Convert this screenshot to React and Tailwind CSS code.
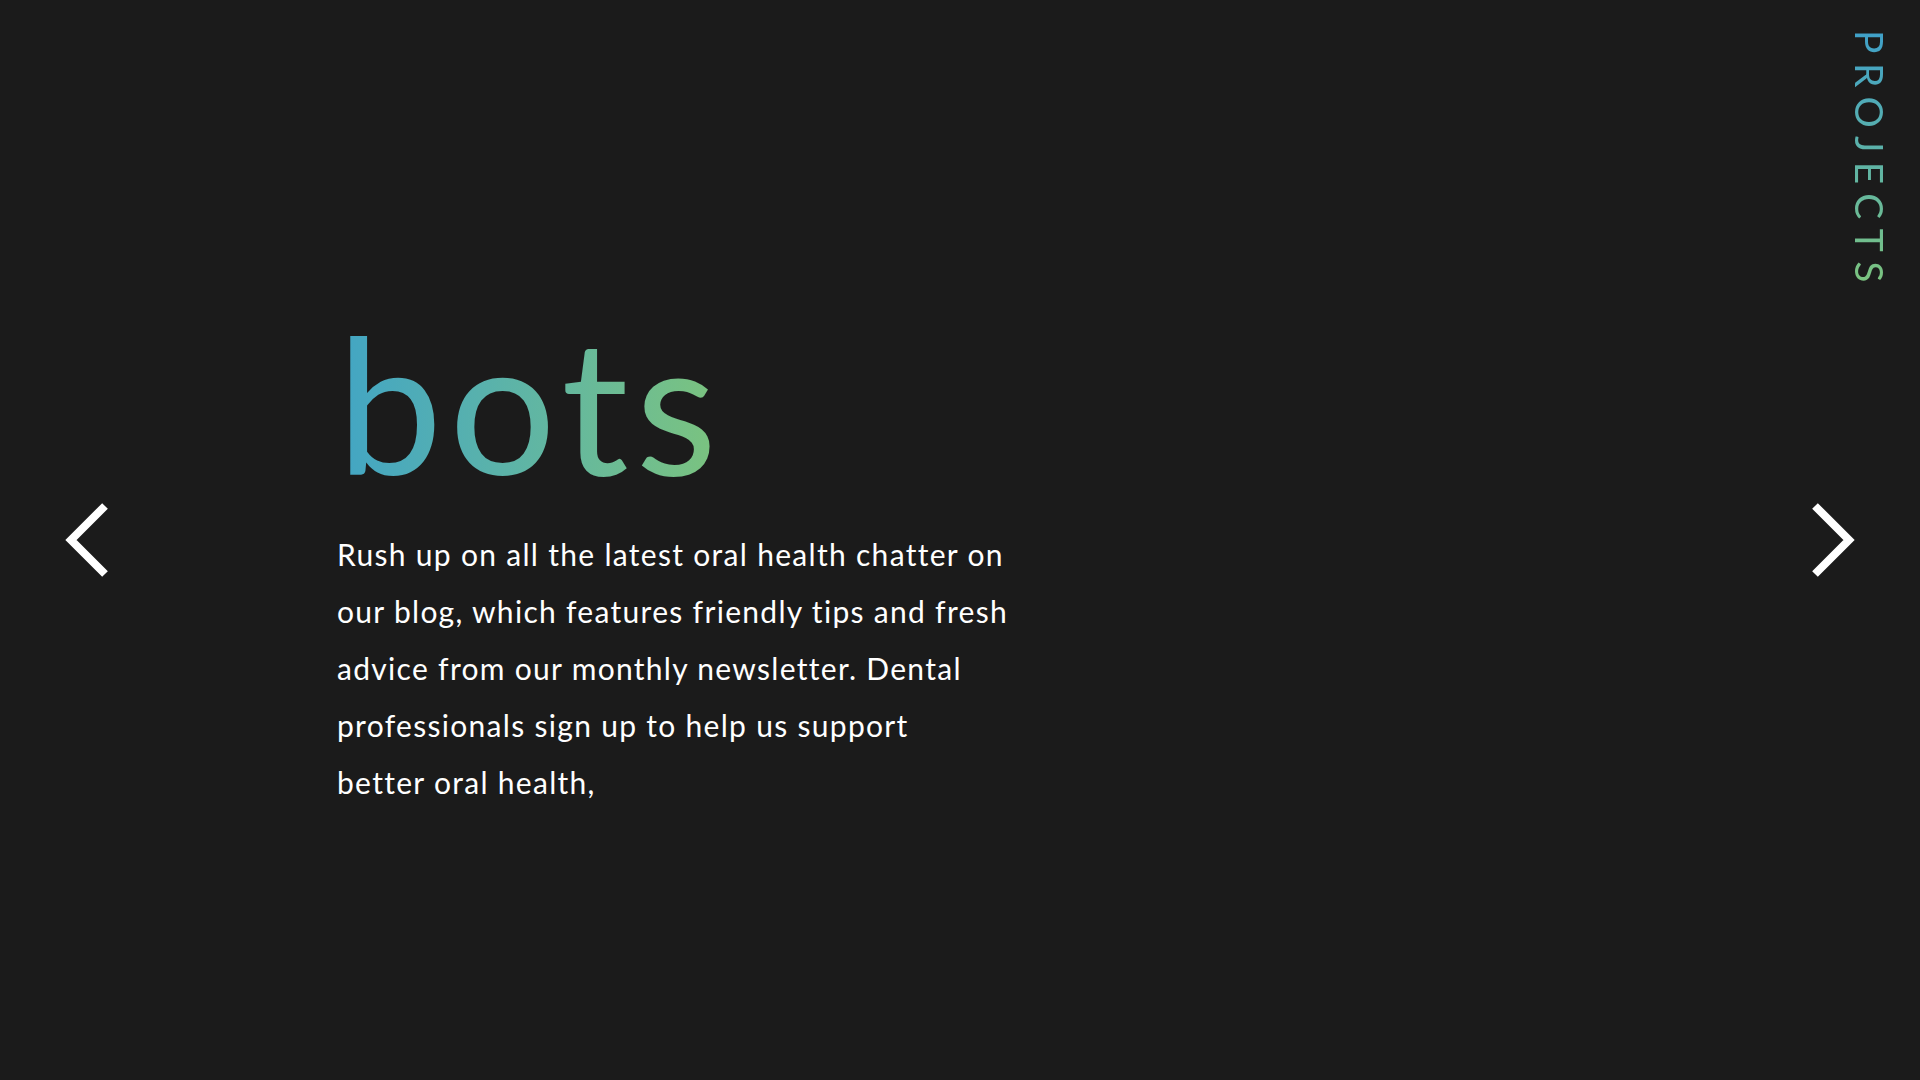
export default function App() {
  const lines = [
    "Rush up on all the latest oral health chatter on",
    "our blog, which features friendly tips and fresh",
    "advice from our monthly newsletter. Dental",
    "professionals sign up to help us support",
    "better oral health,",
  ];
  return (
    <div className="relative h-screen w-full overflow-hidden bg-[#1b1b1b] font-['Lato',sans-serif]">
      <div className="flex h-full items-center">
        <div className="w-[337px] shrink-0 pl-[62px]">
          <svg width="50" height="80" viewBox="0 0 50 80" fill="none">
            <polyline points="43,6 9,40 43,74" stroke="#ffffff" strokeWidth="8" strokeLinejoin="miter" />
          </svg>
        </div>
        <div className="flex-1 self-start pt-[308px]">
          <h1 className="inline-block bg-linear-to-r from-[#42a5c4] to-[#7dc47b] bg-clip-text pr-[8px] text-[188px] font-normal leading-none tracking-[7px] text-transparent">
            bots
          </h1>
          <div className="mt-[30px] text-[30px] font-normal leading-[57px] tracking-[1.3px] text-white">
            {lines.map((l) => (
              <div key={l}>{l}</div>
            ))}
          </div>
        </div>
        <div className="shrink-0 pr-[62px]">
          <svg width="50" height="80" viewBox="0 0 50 80" fill="none">
            <polyline points="7,6 41,40 7,74" stroke="#ffffff" strokeWidth="8" strokeLinejoin="miter" />
          </svg>
        </div>
      </div>
      <div className="absolute right-[31px] top-[30px]">
        <span className="inline-block bg-linear-to-b from-[#3fa0c9] to-[#7dc47b] bg-clip-text text-[39px] font-normal leading-none tracking-[9.5px] text-transparent [writing-mode:vertical-rl]">
          PROJECTS
        </span>
      </div>
    </div>
  );
}
